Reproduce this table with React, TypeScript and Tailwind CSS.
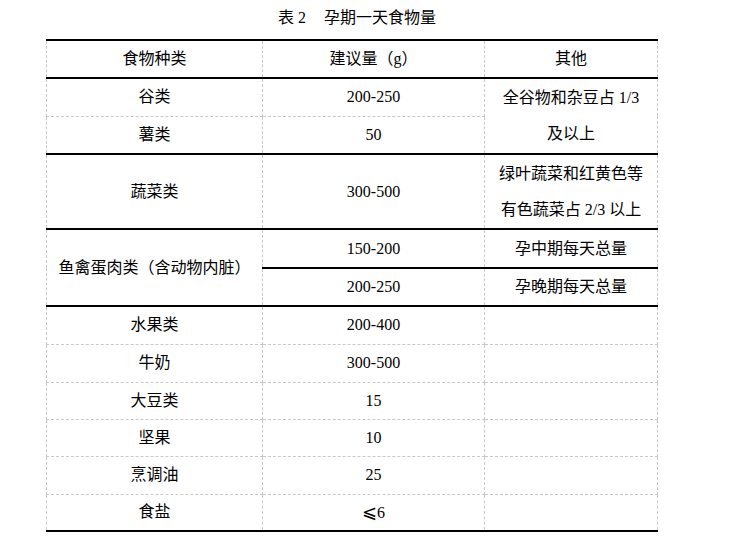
import React from "react";

const td = "border border-dashed border-[#c8c8c8] p-0 text-center align-middle";

const simple: [string, React.ReactNode][] = [
  ["水果类", "200-400"],
  ["牛奶", "300-500"],
  ["大豆类", "15"],
  ["坚果", "10"],
  ["烹调油", "25"],
  [
    "食盐",
    <>
      <span className="text-[18px]" style={{ fontFamily: '"DejaVu Sans", sans-serif' }}>
        ⩽
      </span>
      6
    </>,
  ],
];
const heights = ["h-[38px]", "h-[38px]", "h-[37px]", "h-[37px]", "h-[38px]", "h-[37px]"];

export default function App() {
  return (
    <div
      className="w-[729px] h-[557px] bg-white text-black text-[16px]"
      style={{ fontFamily: '"Liberation Serif", "Noto Sans CJK SC", serif' }}
    >
      <div className="pt-[6px] pl-[278px] leading-[24px] whitespace-pre">
        <span>表 2</span>
        <span className="ml-[18px]">孕期一天食物量</span>
      </div>
      <div className="pl-[46px] pt-[9px]">
        <table className="table-fixed border-collapse w-[611px] leading-[34px]">
          <colgroup>
            <col className="w-[216px]" />
            <col className="w-[222px]" />
            <col className="w-[173px]" />
          </colgroup>
          <tbody>
            <tr className="h-[38px] border-t-2 border-t-black border-b-2 border-b-black">
              <td className={td}>食物种类</td>
              <td className={td}>建议量（g）</td>
              <td className={td}>其他</td>
            </tr>
            <tr className="h-[38px]">
              <td className={td}>谷类</td>
              <td className={td}>200-250</td>
              <td className={td + " leading-[36px]"} rowSpan={2}>
                全谷物和杂豆占 1/3
                <br />
                及以上
              </td>
            </tr>
            <tr className="h-[38px] border-b-2 border-b-black">
              <td className={td}>薯类</td>
              <td className={td}>50</td>
            </tr>
            <tr className="h-[75px] border-b-2 border-b-black">
              <td className={td}>蔬菜类</td>
              <td className={td}>300-500</td>
              <td className={td + " leading-[36px]"}>
                绿叶蔬菜和红黄色等
                <br />
                有色蔬菜占 2/3 以上
              </td>
            </tr>
            <tr className="h-[39px] border-b-2 border-b-black">
              <td className={td} rowSpan={2}>
                鱼禽蛋肉类（含动物内脏）
              </td>
              <td className={td}>150-200</td>
              <td className={td}>孕中期每天总量</td>
            </tr>
            <tr className="h-[38px] border-b-2 border-b-black">
              <td className={td}>200-250</td>
              <td className={td}>孕晚期每天总量</td>
            </tr>
            {simple.map(([a, b], i) => (
              <tr
                key={a}
                className={
                  i === simple.length - 1
                    ? heights[i] + " border-b-2 border-b-black"
                    : heights[i]
                }
              >
                <td className={td}>{a}</td>
                <td className={td}>{b}</td>
                <td className={td}></td>
              </tr>
            ))}
          </tbody>
        </table>
      </div>
    </div>
  );
}
